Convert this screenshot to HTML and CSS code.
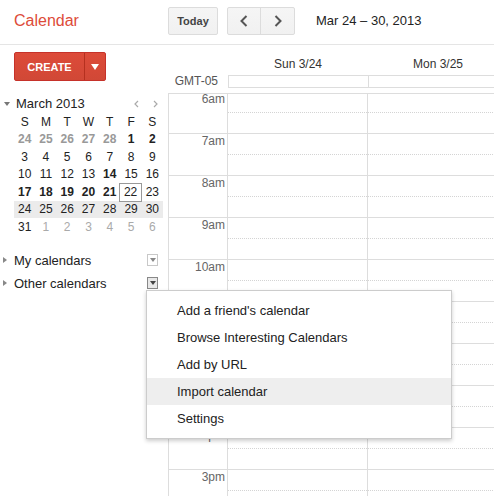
FILE: index.html
```html
<!DOCTYPE html>
<html>
<head>
<meta charset="utf-8">
<title>Calendar</title>
<link rel="stylesheet" href="styles.css">
</head>
<body>
<div class="app">
  <header class="topbar">
    <div class="logo">Calendar</div>
    <button class="btn today">Today</button>
    <div class="btn-group">
      <button class="nav nav-prev"><svg width="8" height="12" viewBox="0 0 8 12"><polyline points="6.5,1 1.5,6 6.5,11" fill="none" stroke="#555" stroke-width="2"/></svg></button>
      <button class="nav"><svg width="8" height="12" viewBox="0 0 8 12"><polyline points="1.5,1 6.5,6 1.5,11" fill="none" stroke="#555" stroke-width="2"/></svg></button>
    </div>
    <div class="range">Mar 24 – 30, 2013</div>
  </header>

  <div class="content">
    <aside class="sidebar">
      <div class="create">
        <span class="create-main">CREATE</span>
        <span class="create-drop"><span class="white-tri"></span></span>
      </div>

      <div class="mini-head">
        <span class="tri-down"></span>
        <span class="mini-title">March 2013</span>
        <span class="mini-nav">
          <svg width="5" height="8" viewBox="0 0 5 8"><polyline points="4,1 1,4 4,7" fill="none" stroke="#aaa" stroke-width="1.2"/></svg>
          <svg width="5" height="8" viewBox="0 0 5 8"><polyline points="1,1 4,4 1,7" fill="none" stroke="#aaa" stroke-width="1.2"/></svg>
        </span>
      </div>

      <div class="mini-cal">
        <div class="week dow"><span>S</span><span>M</span><span>T</span><span>W</span><span>T</span><span>F</span><span>S</span></div>
        <div class="week"><span class="prev">24</span><span class="prev">25</span><span class="prev">26</span><span class="prev">27</span><span class="prev">28</span><span class="b">1</span><span class="b">2</span></div>
        <div class="week"><span>3</span><span>4</span><span>5</span><span>6</span><span>7</span><span>8</span><span>9</span></div>
        <div class="week"><span>10</span><span>11</span><span>12</span><span>13</span><span class="b">14</span><span>15</span><span>16</span></div>
        <div class="week"><span class="b">17</span><span class="b">18</span><span class="b">19</span><span class="b">20</span><span class="b">21</span><span class="today-cell">22</span><span>23</span></div>
        <div class="week cur"><span>24</span><span>25</span><span>26</span><span>27</span><span>28</span><span>29</span><span>30</span></div>
        <div class="week"><span>31</span><span class="next">1</span><span class="next">2</span><span class="next">3</span><span class="next">4</span><span class="next">5</span><span class="next">6</span></div>
      </div>

      <div class="cal-list">
        <div class="cal-row"><span class="tri-right"></span><span class="cal-name">My calendars</span><span class="dd"></span></div>
        <div class="cal-row"><span class="tri-right"></span><span class="cal-name">Other calendars</span><span class="dd dd-active"></span></div>
      </div>
    </aside>

    <main class="main">
      <div class="day-heads">
        <div class="day-head">Sun 3/24</div>
        <div class="day-head">Mon 3/25</div>
      </div>
      <div class="allday">
        <div class="tz">GMT-05</div>
        <div class="allday-cell"></div>
        <div class="allday-cell"></div>
      </div>
      <div class="grid">
        <div class="grid-inner">
          <div class="hour"><div class="time">6am</div><div class="day"><div class="half"></div></div><div class="day"><div class="half"></div></div></div>
          <div class="hour"><div class="time">7am</div><div class="day"><div class="half"></div></div><div class="day"><div class="half"></div></div></div>
          <div class="hour"><div class="time">8am</div><div class="day"><div class="half"></div></div><div class="day"><div class="half"></div></div></div>
          <div class="hour"><div class="time">9am</div><div class="day"><div class="half"></div></div><div class="day"><div class="half"></div></div></div>
          <div class="hour"><div class="time">10am</div><div class="day"><div class="half"></div></div><div class="day"><div class="half"></div></div></div>
          <div class="hour"><div class="time">11am</div><div class="day"><div class="half"></div></div><div class="day"><div class="half"></div></div></div>
          <div class="hour"><div class="time">12pm</div><div class="day"><div class="half"></div></div><div class="day"><div class="half"></div></div></div>
          <div class="hour"><div class="time">1pm</div><div class="day"><div class="half"></div></div><div class="day"><div class="half"></div></div></div>
          <div class="hour"><div class="time">2pm</div><div class="day"><div class="half"></div></div><div class="day"><div class="half"></div></div></div>
          <div class="hour"><div class="time">3pm</div><div class="day"><div class="half"></div></div><div class="day"><div class="half"></div></div></div>
        </div>
      </div>
    </main>
  </div>

  <div class="menu">
    <div class="menu-item">Add a friend's calendar</div>
    <div class="menu-item">Browse Interesting Calendars</div>
    <div class="menu-item">Add by URL</div>
    <div class="menu-item active">Import calendar</div>
    <div class="menu-item">Settings</div>
  </div>
</div>
</body>
</html>
```

FILE: styles.css
```css
* { box-sizing: border-box; }

html, body {
  margin: 0;
  padding: 0;
  background: #fff;
}

body {
  font-family: "Liberation Sans", Arial, sans-serif;
  color: #222;
  width: 494px;
  height: 496px;
  overflow: hidden;
}

.app {
  position: relative;
  width: 494px;
  height: 496px;
  overflow: hidden;
  display: flex;
  flex-direction: column;
}

/* ---------- top bar ---------- */
.topbar {
  display: flex;
  align-items: center;
  height: 45px;
  padding-bottom: 3px;
  border-bottom: 1px solid #e5e5e5;
  flex: none;
}

.logo {
  width: 168px;
  flex: none;
  padding-left: 14px;
  font-size: 16px;
  color: #dd4b39;
}

.btn,
.nav {
  font-family: inherit;
  padding: 0;
  margin: 0;
  cursor: default;
}

.today {
  width: 50px;
  height: 28px;
  flex: none;
  border: 1px solid #dcdcdc;
  border-radius: 2px;
  background: linear-gradient(#f5f5f5, #f1f1f1);
  font-size: 11px;
  font-weight: bold;
  color: #444;
}

.btn-group {
  display: flex;
  margin-left: 9px;
  height: 28px;
  border: 1px solid #dcdcdc;
  border-radius: 2px;
  background: linear-gradient(#f5f5f5, #f1f1f1);
  flex: none;
}

.nav {
  width: 33px;
  height: 26px;
  border: 0;
  background: transparent;
  display: flex;
  align-items: center;
  justify-content: center;
}

.nav-prev {
  border-right: 1px solid #dcdcdc;
}

.range {
  margin-left: 21px;
  font-size: 13px;
  color: #222;
}

/* ---------- content ---------- */
.content {
  display: flex;
  flex: 1;
  min-height: 0;
}

.sidebar {
  width: 168px;
  flex: none;
}

.create {
  display: flex;
  width: 92px;
  height: 29px;
  margin: 7px 0 0 14px;
  border: 1px solid #c6322a;
  border-radius: 2px;
  background: linear-gradient(#dd4b39, #d14836);
}

.create-main {
  width: 70px;
  border-right: 1px solid #b5301f;
  display: flex;
  align-items: center;
  justify-content: center;
  color: #fff;
  font-size: 11px;
  font-weight: bold;
}

.create-drop {
  flex: 1;
  display: flex;
  align-items: center;
  justify-content: center;
}

.white-tri {
  width: 0;
  height: 0;
  border-left: 4px solid transparent;
  border-right: 4px solid transparent;
  border-top: 6px solid #fff;
}

.mini-head {
  display: flex;
  align-items: center;
  height: 19px;
  margin-top: 13px;
  padding-right: 10px;
}

.tri-down {
  width: 0;
  height: 0;
  margin-left: 4px;
  border-left: 3px solid transparent;
  border-right: 3px solid transparent;
  border-top: 4px solid #777;
}

.mini-title {
  margin-left: 6px;
  font-size: 13px;
  color: #222;
}

.mini-nav {
  margin-left: auto;
  display: flex;
  gap: 14px;
  align-items: center;
}

.mini-cal {
  width: 149px;
  margin-left: 14px;
}

.week {
  display: grid;
  grid-template-columns: repeat(7, 1fr);
  height: 17.5px;
  font-size: 12px;
  color: #222;
}

.week span {
  display: flex;
  align-items: center;
  justify-content: center;
}

.week.cur {
  background: #ebebeb;
}

.week .b {
  font-weight: bold;
}

.week .prev {
  font-weight: bold;
  color: #999;
}

.week .next {
  color: #aaa;
}

.week .today-cell {
  border: 1px solid #999;
  margin: 0 0 -1px -1px;
}

.cal-list {
  margin-top: 13px;
}

.cal-row {
  display: flex;
  align-items: center;
  height: 23px;
  padding-right: 10px;
}

.tri-right {
  width: 0;
  height: 0;
  margin-left: 3px;
  border-top: 3px solid transparent;
  border-bottom: 3px solid transparent;
  border-left: 4px solid #888;
}

.cal-name {
  margin-left: 7px;
  font-size: 13px;
  color: #222;
}

.dd {
  margin-left: auto;
  width: 11px;
  height: 12px;
  border: 1px solid #c8c8c8;
  background: #fff;
  display: flex;
  align-items: center;
  justify-content: center;
}

.dd::after {
  content: "";
  width: 0;
  height: 0;
  border-left: 3px solid transparent;
  border-right: 3px solid transparent;
  border-top: 4px solid #888;
}

.dd-active {
  border-color: #888;
  background: #e8e8e8;
}

.dd-active::after {
  border-top-color: #444;
}

/* ---------- main ---------- */
.main {
  flex: 1;
  min-width: 0;
  display: flex;
  flex-direction: column;
  overflow: hidden;
}

.day-heads {
  display: flex;
  margin-left: 60px;
  height: 30px;
  padding-top: 12px;
  flex: none;
}

.day-head {
  width: 140px;
  flex: none;
  text-align: center;
  font-size: 12px;
  line-height: 14px;
  color: #333;
}

.allday {
  display: flex;
  height: 13px;
  flex: none;
}

.tz {
  width: 60px;
  flex: none;
  text-align: right;
  padding-right: 10px;
  font-size: 12px;
  line-height: 13px;
  color: #555;
}

.allday-cell {
  width: 140px;
  flex: none;
  height: 13px;
  border: 1px solid #ddd;
  border-right: 0;
}

.grid {
  margin-top: 5px;
  flex: 1;
  border-top: 1px solid #ddd;
  border-left: 1px solid #ddd;
  overflow: hidden;
}

.grid-inner {
  margin-top: -2px;
}

.hour {
  display: flex;
  height: 42px;
  border-bottom: 1px solid #ddd;
}

.time {
  width: 59px;
  flex: none;
  border-right: 1px solid #ddd;
  text-align: right;
  padding-right: 2px;
  font-size: 12px;
  line-height: 14px;
  color: #666;
}

.day {
  width: 140px;
  flex: none;
  border-right: 1px solid #ddd;
}

.half {
  height: 21px;
  border-bottom: 1px dotted #d4d4d4;
}

/* ---------- dropdown menu ---------- */
.menu {
  position: absolute;
  left: 146px;
  top: 290px;
  width: 306px;
  padding: 6px 0;
  background: #fff;
  border: 1px solid rgba(0, 0, 0, 0.2);
  box-shadow: 0 2px 4px rgba(0, 0, 0, 0.2);
}

.menu-item {
  height: 27px;
  line-height: 27px;
  padding-left: 30px;
  font-size: 13px;
  color: #222;
}

.menu-item.active {
  background: #eee;
}
```
